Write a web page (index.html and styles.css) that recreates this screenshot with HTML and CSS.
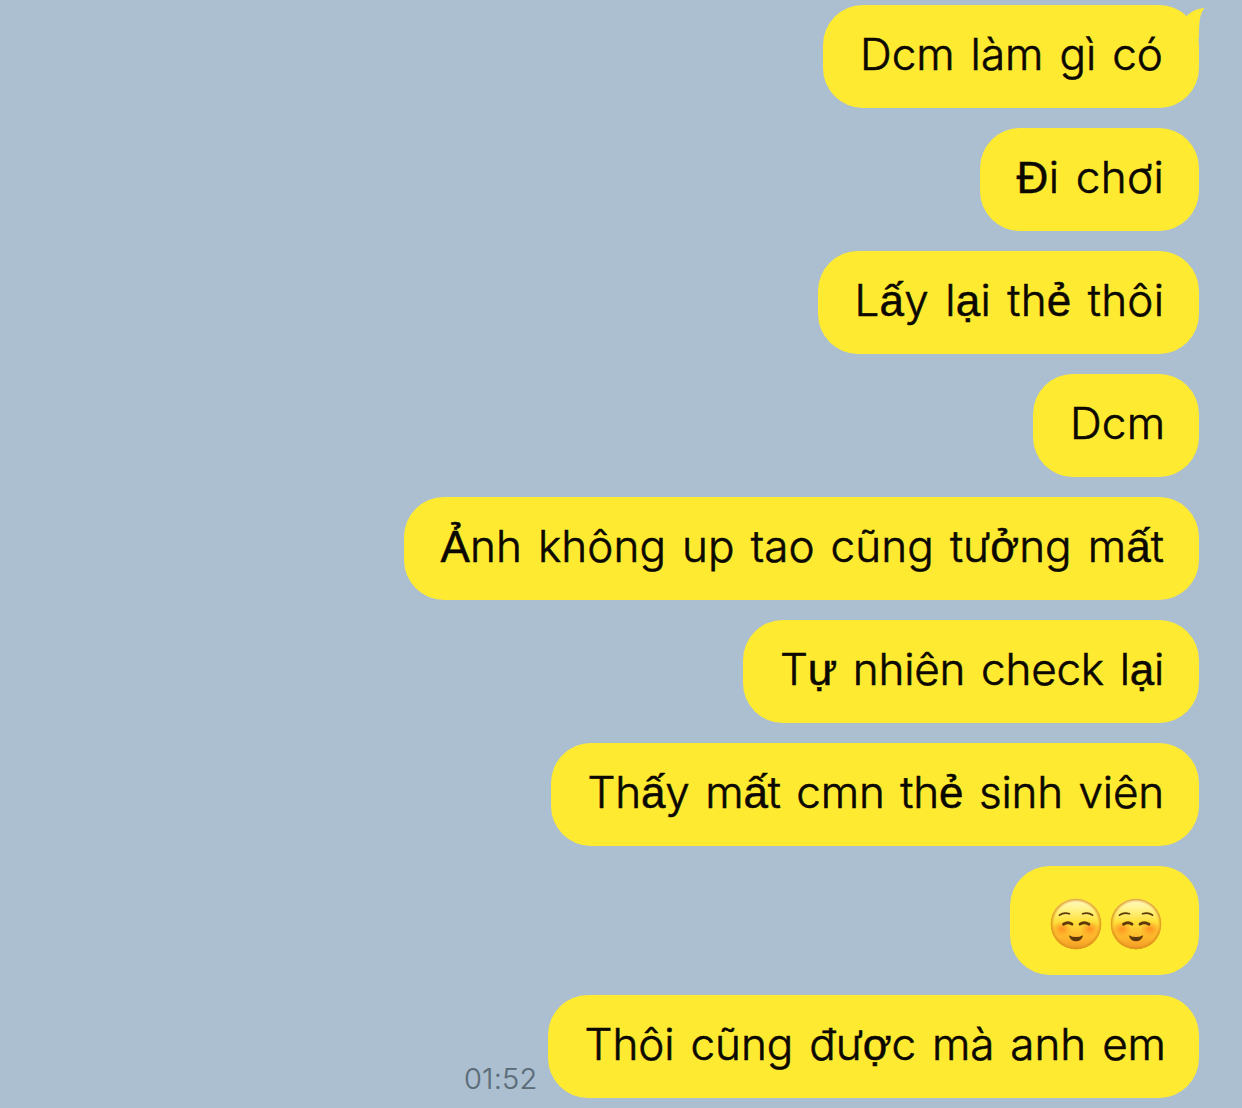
FILE: index.html
```html
<!DOCTYPE html>
<html lang="vi">
<head>
<meta charset="utf-8">
<title>Chat</title>
<link rel="stylesheet" href="styles.css">
</head>
<body>
<svg class="defs" width="0" height="0" aria-hidden="true">
  <defs>
    <linearGradient id="skin" x1="0" y1="0" x2="0" y2="1">
      <stop offset="0" stop-color="#fff8c8"/><stop offset=".2" stop-color="#fff48c"/><stop offset=".45" stop-color="#ffe03a"/><stop offset=".8" stop-color="#fdb22a"/><stop offset="1" stop-color="#f09a26"/>
    </linearGradient>
    <radialGradient id="rim"><stop offset=".86" stop-color="#e09a1c" stop-opacity="0"/><stop offset="1" stop-color="#d88a18" stop-opacity=".9"/></radialGradient>
    <radialGradient id="blush"><stop offset="0" stop-color="#ff7a1c" stop-opacity=".75"/><stop offset="1" stop-color="#ff8a20" stop-opacity="0"/></radialGradient>
    <symbol id="smile" viewBox="0 0 52 52">
      <circle cx="26" cy="26" r="25.3" fill="url(#skin)"/>
      <circle cx="26" cy="26" r="25.3" fill="url(#rim)"/>
      <ellipse cx="12" cy="31" rx="10" ry="8" fill="url(#blush)"/>
      <ellipse cx="40" cy="31" rx="10" ry="8" fill="url(#blush)"/>
      <g fill="none" stroke="#5e3808" stroke-linecap="round">
        <path d="M9.500 17.200Q13.500 14 19.500 15.700M32.500 15.700Q38.500 14 42.500 17.200" stroke-width="1.700"/>
        <path d="M13.500 26.200Q18 23.300 22 26.200M30 26.200Q34 23.300 39 26.200" stroke-width="2.800"/>
      </g>
      <path d="M18.800 37.200Q26 41 33.200 37.200Q31.500 43.300 26 43.300Q20.500 43.300 18.800 37.200Z" fill="#5e3808"/>
    </symbol>
  </defs>
</svg>
<main class="chat">
  <div class="row"><div class="bubble b1"><span>Dcm làm gì có</span><svg class="tail" width="22" height="34" viewBox="0 0 22 34"><path d="M0 14L4 10.500Q11 3.500 21.500 3C17.500 8 16 13 16 34Z"/></svg></div></div>
  <div class="row"><div class="bubble b2"><span><b>Đ</b>i chơi</span></div></div>
  <div class="row"><div class="bubble b3"><span>L<b>ấ</b>y l<b>ạ</b>i th<b>ẻ</b> thôi</span></div></div>
  <div class="row"><div class="bubble b4"><span>Dcm</span></div></div>
  <div class="row"><div class="bubble b5"><span><b>Ả</b>nh không up tao cũng tư<b>ở</b>ng m<b>ấ</b>t</span></div></div>
  <div class="row"><div class="bubble b6"><span>T<b>ự</b> nhiên check l<b>ạ</b>i</span></div></div>
  <div class="row"><div class="bubble b7"><span>Th<b>ấ</b>y m<b>ấ</b>t cmn th<b>ẻ</b> sinh viên</span></div></div>
  <div class="row"><div class="bubble emoji" role="img" aria-label="☺️☺️"><svg width="52" height="52"><use href="#smile"/></svg><svg width="52" height="52"><use href="#smile"/></svg></div></div>
  <div class="row"><time class="time">01:52</time><div class="bubble b9"><span>Thôi cũng đư<b>ợ</b>c mà anh em</span></div></div>
</main>
</body>
</html>
```
FILE: styles.css
```css
* { box-sizing: border-box; }
body { margin: 0; background: #abbfd0; font-family: Inter, sans-serif; font-weight: 300; }
.defs { position: absolute; }
.chat { display: flex; flex-direction: column; gap: 20.6px; height: 1108px; padding: 5.4px 43px 0 0; overflow: hidden; }
.row { display: flex; justify-content: flex-end; align-items: flex-end; }
.bubble { position: relative; height: 102.4px; padding: 19px 0 0 37px; border-radius: 40px; background: #ffea32; color: #0b0800; font-size: 44px; line-height: 60px; word-spacing: 3.6px; -webkit-text-stroke: 0.6px #0b0800; white-space: nowrap; }
.bubble b { font-family: "Liberation Sans", sans-serif; font-weight: 400; font-size: 44px; line-height: 1; -webkit-text-stroke: 0.5px #0b0800; }
.tail { position: absolute; right: -6px; top: 0; fill: #ffea32; }
.b1 { width: 376px; letter-spacing: 0; }
.b2 { width: 219.5px; letter-spacing: 0.4px; }
.b3 { width: 381.5px; letter-spacing: 0.25px; }
.b4 { width: 166px; letter-spacing: 0.2px; }
.b5 { width: 795.5px; letter-spacing: 0.08px; }
.b6 { width: 456px; letter-spacing: -0.2px; }
.b7 { width: 648.5px; letter-spacing: -0.22px; }
.b9 { width: 651.5px; letter-spacing: -0.04px; }
.emoji { display: flex; gap: 8px; width: 189.5px; height: 108.4px; padding: 32px 0 0 40.5px; }
.time { margin: 0 10px 1px 0; font-size: 29px; line-height: 36px; letter-spacing: 0.2px; color: #5b6c78; -webkit-text-stroke: 0.2px #5b6c78; }
```
